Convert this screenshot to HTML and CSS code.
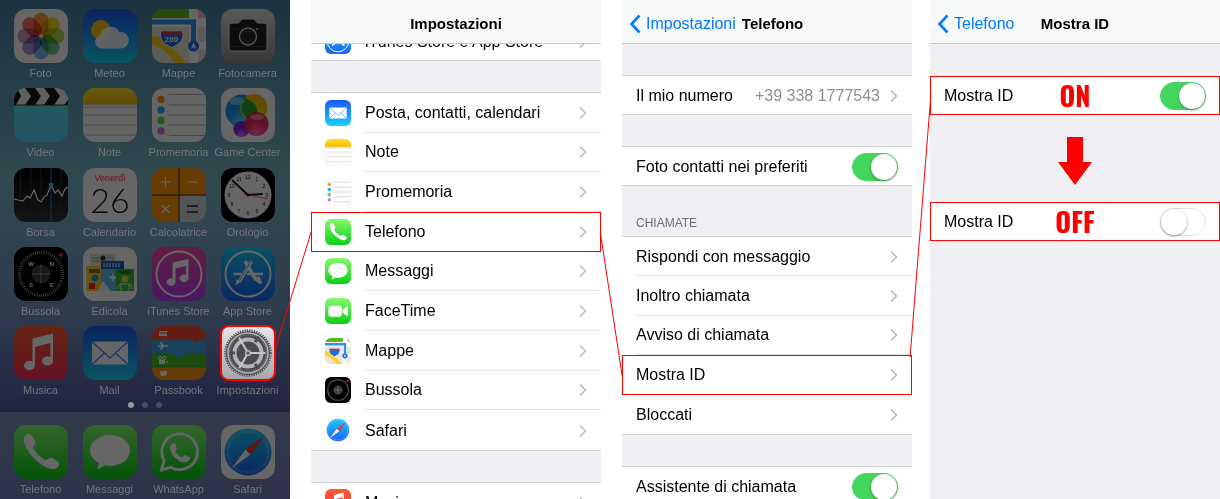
FILE: index.html
```html
<!DOCTYPE html>
<html lang="it">
<head>
    <meta charset="UTF-8">
    <meta name="viewport" content="width=device-width, initial-scale=1.0">
    <title>Mostra ID - Impostazioni Telefono</title>
    <link rel="stylesheet" href="styles.css">
</head>
<body>
    <!-- Icone -->
    <svg class="sprite" aria-hidden="true">
        <defs>
            <linearGradient id="gBlue" x2="0" y2="1"><stop stop-color="#1a56f0"/><stop offset="1" stop-color="#1ad2fb"/></linearGradient>
            <linearGradient id="gSky" x2="0" y2="1"><stop stop-color="#1ac8fb"/><stop offset="1" stop-color="#1a62f2"/></linearGradient>
            <linearGradient id="gGreen" x2="0" y2="1"><stop stop-color="#86fb70"/><stop offset="1" stop-color="#08cf14"/></linearGradient>
            <linearGradient id="gPink" x2="0" y2="1"><stop stop-color="#f0489c"/><stop offset="1" stop-color="#b73df5"/></linearGradient>
            <linearGradient id="gRed" x2="0" y2="1"><stop stop-color="#ff5a2c"/><stop offset="1" stop-color="#fb2d55"/></linearGradient>
            <linearGradient id="gGrey" x2="0" y2="1"><stop stop-color="#dedee0"/><stop offset="1" stop-color="#8c8c90"/></linearGradient>
            <linearGradient id="gVideo" x2="0" y2="1"><stop stop-color="#55efcb"/><stop offset="1" stop-color="#5bcaff"/></linearGradient>
            <linearGradient id="gYellow" x2="0" y2="1"><stop stop-color="#ffdf1e"/><stop offset="1" stop-color="#f5bd00"/></linearGradient>
            <linearGradient id="gStock" x2="0" y2="1"><stop stop-color="#000"/><stop offset="1" stop-color="#333"/></linearGradient>
            <linearGradient id="gGear" x2="0" y2="1"><stop stop-color="#e6e7ea"/><stop offset="1" stop-color="#a4a5aa"/></linearGradient>
            <radialGradient id="bBlue" cy=".9"><stop stop-color="#54e0ff"/><stop offset="1" stop-color="#1892e8"/></radialGradient>
            <radialGradient id="bYellow" cy=".9"><stop stop-color="#ffef40"/><stop offset="1" stop-color="#f0c000"/></radialGradient>
            <radialGradient id="bPink" cy=".9"><stop stop-color="#ff60c0"/><stop offset="1" stop-color="#f81850"/></radialGradient>
            <radialGradient id="bViolet" cy=".9"><stop stop-color="#e070ff"/><stop offset="1" stop-color="#7a20e0"/></radialGradient>
        </defs>
        <symbol id="foto" viewBox="0 0 54 54">
            <rect width="54" height="54" fill="#fff"/>
            <g class="petals" transform="translate(27 27)">
                <rect x="-7.5" y="-23.5" width="15" height="22" rx="7.5" fill="#f9a13a"/>
                <rect x="-7.5" y="-23.5" width="15" height="22" rx="7.5" fill="#efdd20" transform="rotate(45)"/>
                <rect x="-7.5" y="-23.5" width="15" height="22" rx="7.5" fill="#b9d55a" transform="rotate(90)"/>
                <rect x="-7.5" y="-23.5" width="15" height="22" rx="7.5" fill="#70c282" transform="rotate(135)"/>
                <rect x="-7.5" y="-23.5" width="15" height="22" rx="7.5" fill="#86b8e6" transform="rotate(180)"/>
                <rect x="-7.5" y="-23.5" width="15" height="22" rx="7.5" fill="#a394cf" transform="rotate(225)"/>
                <rect x="-7.5" y="-23.5" width="15" height="22" rx="7.5" fill="#cd98c8" transform="rotate(270)"/>
                <rect x="-7.5" y="-23.5" width="15" height="22" rx="7.5" fill="#f4705e" transform="rotate(315)"/>
            </g>
        </symbol>
        <symbol id="meteo" viewBox="0 0 54 54">
            <rect width="54" height="54" fill="url(#gBlue)"/>
            <circle cx="18" cy="21" r="10" fill="#fdc60d"/>
            <path d="M18.5 39.5a6.5 6.5 0 0 1-1.5-12.8a10.5 10.5 0 0 1 19.5-3.7a8.3 8.3 0 1 1 .5 16.5z" fill="#fff" opacity=".88"/>
        </symbol>
        <symbol id="mappe" viewBox="0 0 54 54">
            <rect width="54" height="54" fill="#ece4d2"/>
            <path d="M0 0h38v9H0z" fill="#5cb81c"/>
            <path d="M45 0h9v9h-9z" fill="#f7b9c8"/>
            <path d="M0 27c16 0 26 22 38 29H24C18 46 10 37 0 36z" fill="#fcd117"/>
            <path d="M0 9h54v9H0zM37 0h9v54h-9zM46 33h8v7h-8z" fill="#fff"/>
            <path d="M0 13h41.5v20" fill="none" stroke="#2f8df5" stroke-width="5"/>
            <circle cx="41.5" cy="37" r="5.5" fill="#1b6ee8"/>
            <path d="M41.5 33l2.5 7-2.500-2-2.500 2z" fill="#fff"/>
            <path d="M9 22h21.5c2 8-2 13-10.700 16.5C11 35 7 30 9 22z" fill="#1f6ad8" stroke="#fff"/>
            <path d="M9.5 22.5h20.5v3h-21z" fill="#e2333b"/>
        </symbol>
        <symbol id="fotocamera" viewBox="0 0 54 54">
            <rect width="54" height="54" fill="url(#gGrey)"/>
            <path d="M8 16q0-2 2-2h7c2 0 2-4 5-4h10c3 0 3 4 5 4h7q2 0 2 2v24q0 2-2 2H10q-2 0-2-2z" fill="#1c1c1e" stroke="#eee"/>
            <path d="M8.5 20h37M8.5 37.5h37" stroke="#555" stroke-width=".7"/>
            <circle cx="27" cy="27.5" r="8.5" fill="#333" stroke="#ddd" stroke-width="1.3"/>
            <circle cx="27" cy="27.5" r="5.5" fill="#28282a"/>
            <circle cx="36" cy="20" r="1" fill="#f8c200"/>
        </symbol>
        <symbol id="video" viewBox="0 0 54 54">
            <rect width="54" height="54" fill="url(#gVideo)"/>
            <path d="M0 0h54v17H0z" fill="#efefef"/>
            <path d="M0 0h3l4 8-5 9H0zM11 0h10l6 8-6 9H11l6-9zM30 0h10l6 8-6 9H30l6-9zM49 0h5v8zM54 12v5h-4z" fill="#161616"/>
            <path d="M0 17h54" stroke="#222"/>
        </symbol>
        <symbol id="note" viewBox="0 0 54 54">
            <rect width="54" height="54" fill="#fdfdfd"/>
            <rect width="54" height="16.5" fill="url(#gYellow)"/>
            <path d="M0 17h54M0 27h54M0 37h54M0 47h54" stroke="#c2c2c2"/>
            <path d="M0 19.5h54" stroke="#999" stroke-dasharray="1 1"/>
        </symbol>
        <symbol id="promemoria" viewBox="0 0 54 54">
            <rect width="54" height="54" fill="#fdfdfd"/>
            <path d="M17 6.5h37M17 17h37M17 27h37M17 37h37M17 47.5h37" stroke="#b4b4b4"/>
            <circle cx="9" cy="11.5" r="3.7" fill="#fd9512"/>
            <circle cx="9" cy="22" r="3.7" fill="#1badf8"/>
            <circle cx="9" cy="32.5" r="3.7" fill="#5fd83b"/>
            <circle cx="9" cy="43" r="3.7" fill="#cc73e1"/>
        </symbol>
        <symbol id="gamecenter" viewBox="0 0 54 54">
            <rect width="54" height="54" fill="#fff"/>
            <circle cx="21" cy="23" r="16.5" fill="url(#bBlue)"/>
            <circle cx="33" cy="19.5" r="13.5" fill="url(#bYellow)"/>
            <path d="M23 10C18 17 20 29 31 33c8-7 8-18-8-23z" fill="#27a32b"/>
            <circle cx="20.5" cy="41" r="8" fill="url(#bViolet)"/>
            <circle cx="35.5" cy="36" r="12" fill="url(#bPink)" opacity=".93"/>
            <ellipse cx="16" cy="13" rx="8" ry="4" fill="#fff" opacity=".4"/>
            <ellipse cx="36" cy="29" rx="7" ry="3" fill="#fff" opacity=".4"/>
        </symbol>
        <symbol id="borsa" viewBox="0 0 54 54">
            <rect width="54" height="54" fill="url(#gStock)"/>
            <path d="M6.5 0v54M17 0v54M27 0v54M47 0v54" stroke="#333"/>
            <path d="M37 0v54" stroke="#2a7fb8"/>
            <path d="M0 31l4 1 5 1 4-5 3 2 4-8 4 10 3 2 3-5 3-2 4-10 4 8 3-3 4 6 3-7 3-2" fill="none" stroke="#fff" stroke-width="1.2"/>
            <circle cx="37" cy="17" r="2.3" fill="#2ab3ff"/>
        </symbol>
        <symbol id="calcolatrice" viewBox="0 0 54 54">
            <rect width="54" height="54" fill="#ff9500"/>
            <path d="M27 27h27v27H27z" fill="#d0d1d6"/>
            <path d="M27 0v54M0 27h54" stroke="#222"/>
            <path d="M8.5 14h10M13.5 9v10M35.5 14h10M9.5 37l8 8M17.5 37l-8 8" stroke="#fff" stroke-width="1.2"/>
            <path d="M35 38h11M35 44h11" stroke="#222" stroke-width="1.3"/>
        </symbol>
        <symbol id="bussola" viewBox="0 0 54 54">
            <rect width="54" height="54" fill="#000"/>
            <circle cx="27" cy="27" r="21.5" fill="none" stroke="#ccc" stroke-width="3" stroke-dasharray=".7 1.5"/>
            <circle cx="27" cy="27" r="9.5" fill="#3c3c3e"/>
            <path d="M17.5 27h19M27 17.5v19" stroke="#999" stroke-width=".8"/>
            <path d="M44 8l5-3-1 6z" fill="#ff3b30"/>
        </symbol>
        <symbol id="edicola" viewBox="0 0 54 54">
            <rect width="54" height="54" fill="#fff"/>
            <path d="M7 7h26v12H7z" fill="#e2e2e2"/>
            <path d="M9 11h22M9 14h22" stroke="#999"/><circle cx="20" cy="11" r="2.5" fill="#333"/>
            <path d="M3.5 19h17v25h-17z" fill="#fcca1b"/>
            <path d="M6 22h11v4H6z" fill="#8a6c20"/>
            <circle cx="12" cy="31" r="3.5" fill="#2196e8"/><path d="M6 36h6v6H6z" fill="#e8261c"/>
            <path d="M18 14h23v30H18z" fill="#5bb8ee"/>
            <path d="M18 14h23v8H18z" fill="#185fc0"/>
            <path d="M21 16v4M24 16v4M27 16v4M30 16v4M33 16v4M36 16v4" stroke="#fff"/>
            <path d="M14 44l6-10 8 10zM25 30l4-1 1-5 1 5 4 2-4 1-1 3-1-3z" fill="#e8f5ff"/>
            <path d="M33 22h18v22H33z" fill="#3cb43c"/>
            <path d="M36 25h12" stroke="#1d7d24" stroke-width="3"/>
            <circle cx="42" cy="32" r="3.5" fill="#c8e63c"/>
            <path d="M34 42l3-5h10l3 5M38 37v7M46 37v7" stroke="#d8ffd0" fill="none"/>
        </symbol>
        <symbol id="itunes" viewBox="0 0 54 54">
            <rect width="54" height="54" fill="url(#gPink)"/>
            <circle cx="27" cy="27" r="22.5" fill="none" stroke="#fff" stroke-width="2"/>
            <path d="M20.5 15.5l16-3.500v19.5a4.5 3.8 0 1 1-2.500-3.500V19l-10.500 2.300v13.500a4.5 3.800 0 1 1-3-3.400z" fill="#fff"/>
        </symbol>
        <symbol id="appstore" viewBox="0 0 54 54">
            <rect width="54" height="54" fill="url(#gSky)"/>
            <circle cx="27" cy="27" r="22.5" fill="none" stroke="#fff" stroke-width="2"/>
            <path d="M12.5 27h8M26 27h16" stroke="#fff" stroke-width="2.5"/>
            <path d="M30.5 14L18 35M24 14l11 19" stroke="#fff" stroke-width="3.5"/>
            <path d="M30 14L18 34" stroke="#1a9af8" stroke-width=".8"/>
            <path d="M15.5 32l4 2.5-5 4zM33 31l5-2c2 3 3 5 2.5 8.5-4-1-6-3-7.500-6.500z" fill="#fff"/>
        </symbol>
        <symbol id="musica" viewBox="0 0 54 54">
            <rect width="54" height="54" fill="url(#gRed)"/>
            <path d="M18.5 12.5l20.5-5v27.5a5.5 4.600 0 1 1-2.500-3.900V17l-15.500 4V39.5a5.5 4.600 0 1 1-2.500-3.900z" fill="#fff"/>
        </symbol>
        <symbol id="mail" viewBox="0 0 54 54">
            <rect width="54" height="54" fill="url(#gBlue)"/>
            <rect x="9" y="15.5" width="36" height="23" rx="1.5" fill="#fff"/>
            <path d="M9.5 16L27 32l17.500-16M9.5 38l12-11M44.5 38l-12-11" fill="none" stroke="#3a8cf5" stroke-width="1.3"/>
        </symbol>
        <symbol id="passbook" viewBox="0 0 54 54">
            <rect width="54" height="54" fill="#fd9612"/>
            <path d="M0 13h54v15H0z" fill="#3fa5e0"/>
            <path d="M0 0h54v13.500h-7a3 3 0 0 1-6 0H0z" fill="#f9472f"/>
            <path d="M0 27h54v14H0z" fill="#42b81e"/>
            <path d="M21 27a6 5 0 0 0 12 0z" fill="#3fa5e0"/>
            <path d="M0 41h54" stroke="#2c7a12" stroke-dasharray="1 1"/>
            <path d="M7 5h8v5H7zM8 45h7v3l-2 2H9z" fill="#fff"/><path d="M7 7h8" stroke="#f9472f"/>
            <path d="M6 19.300h3l-1-3h1.500l2.500 3h4v1.400h-4l-2.500 3H8l1-3H6z" fill="#fff"/>
            <path d="M7 34h6v4H7zM13.500 36l2-1.500v3.500z" fill="#fff"/>
            <circle cx="8" cy="32" r="1.7" fill="none" stroke="#fff"/><circle cx="12.5" cy="32" r="1.7" fill="none" stroke="#fff"/>
        </symbol>
        <symbol id="impostazioni" viewBox="0 0 54 54">
            <rect width="54" height="54" fill="url(#gGear)"/>
            <circle cx="27" cy="27" r="22" fill="#4b4c4f"/>
            <circle cx="27" cy="27" r="22.8" fill="none" stroke="#4b4c4f" stroke-width="2" stroke-dasharray="1.2 1.2"/>
            <circle cx="27" cy="27" r="20" fill="none" stroke="#b0b1b4" stroke-width="1.6"/>
            <circle cx="27" cy="27" r="18.3" fill="none" stroke="#77787c" stroke-width="1.5" stroke-dasharray="1 1"/>
            <circle cx="27" cy="27" r="13.5" fill="none" stroke="#b4b5b9" stroke-width="4"/>
            <path d="M34 16l4-5M14 27H9M34 38l4 5" stroke="#4b4c4f" stroke-width="3"/>
            <path d="M29 27h15.5M26 25.200L18.200 11.800M26 28.800L18.200 42.200" stroke="#c6c7ca" stroke-width="2"/>
            <circle cx="27" cy="27" r="2.4" fill="#55565a" stroke="#c6c7ca" stroke-width="1.2"/>
        </symbol>
        <symbol id="telefono" viewBox="0 0 54 54">
            <rect width="54" height="54" fill="url(#gGreen)"/>
            <path d="M10 13c1-3 3-4 5-4 2 0 4 3 6 7 1 3-1 4-2 6 0 3 10 13 13 13 2 0 3-3 6-2 3 1 6 3 7 5 1 3-2 5-4 6C30 46 8 25 10 13z" fill="#fff"/>
        </symbol>
        <symbol id="messaggi" viewBox="0 0 54 54">
            <rect width="54" height="54" fill="url(#gGreen)"/>
            <path d="M27 10c11 0 20 6.5 20 15.5S38 41 27 41c-2 0-4 0-6-.7-2 2.200-4.500 3.700-7.500 3.700 1.500-1.500 2.500-4 2.500-6.200-5.500-2.800-9-7-9-12.300C7 16.500 16 10 27 10z" fill="#fff"/>
        </symbol>
        <symbol id="whatsapp" viewBox="0 0 54 54">
            <rect width="54" height="54" fill="url(#gGreen)"/>
            <path d="M9.5 45l2.700-9.500a17.800 17.800 0 1 1 6.700 6.700z" fill="none" stroke="#fff" stroke-width="2.8"/>
            <path d="M18 22c1-3 3-4.500 5-3.500l2 5c0 1.500-1.500 2-1.500 3 1.500 3 4 5 6.500 6 1 0 2-2.500 3-2.500l5 2.500c.5 2-2 4.500-5 5-7 0-15-8-15-15.500z" fill="#fff"/>
        </symbol>
        <symbol id="safari" viewBox="0 0 54 54">
            <rect width="54" height="54" fill="#fff"/>
            <circle cx="27" cy="27" r="23.5" fill="url(#gSky)"/>
            <circle cx="27" cy="27" r="20.5" fill="none" stroke="#fff" stroke-width="3" stroke-dasharray=".6 1.550" opacity=".5"/>
            <path d="M43 11L24.500 24.500l5 5z" fill="#ff3126"/>
            <path d="M11 43l13.500-18.500 5 5z" fill="#fff"/>
        </symbol>
        <symbol id="facetime" viewBox="0 0 54 54">
            <rect width="54" height="54" fill="url(#gGreen)"/>
            <rect x="7" y="16" width="28" height="23" rx="5" fill="#fff"/>
            <path d="M36.500 25L46 17q1.500-1 1.500 1v18.500q0 2-1.500 1L36.500 30z" fill="#fff"/>
        </symbol>
        <symbol id="chevron" viewBox="0 0 8 14">
            <path d="M1 1.500L6.500 7 1 12.500" fill="none" stroke="currentColor" stroke-width="1.5"/>
        </symbol>
        <symbol id="back" viewBox="0 0 12 20">
            <path d="M10.500 1.500L2.500 10l8 8.500" fill="none" stroke="currentColor" stroke-width="2.6"/>
        </symbol>
    </svg>

    <div class="guide">
        <!-- Schermata Home -->
        <section class="screen home">
            <div class="apps">
                <a class="app" href="#"><svg><use href="#foto"/></svg><span>Foto</span></a>
                <a class="app" href="#"><svg><use href="#meteo"/></svg><span>Meteo</span></a>
                <a class="app" href="#">
                    <svg viewBox="0 0 54 54">
                        <use href="#mappe"/>
                        <text x="19.5" y="33" class="svg-text" font-size="8" font-weight="700" fill="#fff">280</text>
                    </svg>
                    <span>Mappe</span>
                </a>
                <a class="app" href="#"><svg><use href="#fotocamera"/></svg><span>Fotocamera</span></a>
                <a class="app" href="#"><svg><use href="#video"/></svg><span>Video</span></a>
                <a class="app" href="#"><svg><use href="#note"/></svg><span>Note</span></a>
                <a class="app" href="#"><svg><use href="#promemoria"/></svg><span>Promemoria</span></a>
                <a class="app" href="#"><svg><use href="#gamecenter"/></svg><span>Game Center</span></a>
                <a class="app" href="#"><svg><use href="#borsa"/></svg><span>Borsa</span></a>
                <a class="app" href="#">
                    <svg viewBox="0 0 54 54">
                        <rect width="54" height="54" fill="#fff"/>
                        <text x="27" y="13" class="svg-text" font-size="9" fill="#ff2d21">Venerdì</text>
                        <text x="27" y="45" class="svg-text thin" font-size="34" fill="#111">26</text>
                    </svg>
                    <span>Calendario</span>
                </a>
                <a class="app" href="#"><svg><use href="#calcolatrice"/></svg><span>Calcolatrice</span></a>
                <a class="app" href="#">
                    <svg viewBox="0 0 54 54">
                        <rect width="54" height="54" fill="#000"/>
                        <circle cx="27" cy="27" r="23.5" fill="#fff"/>
                        <g class="svg-text" font-size="5" fill="#111">
                            <text x="27" y="11">12</text><text x="36" y="13">1</text><text x="43" y="20">2</text>
                            <text x="46" y="29">3</text><text x="43" y="38">4</text><text x="36" y="45">5</text>
                            <text x="27" y="47">6</text><text x="18" y="45">7</text><text x="11" y="38">8</text>
                            <text x="8" y="29">9</text><text x="11" y="20">10</text><text x="18" y="13">11</text>
                        </g>
                        <path d="M27 27L11.500 12.500M27 27l14-1" stroke="#111" stroke-width="1.8" stroke-linecap="round"/>
                        <path d="M23 26l24 5" stroke="#f33" stroke-width=".8"/>
                        <circle cx="27" cy="27" r="1.5" fill="#111"/>
                    </svg>
                    <span>Orologio</span>
                </a>
                <a class="app" href="#">
                    <svg viewBox="0 0 54 54">
                        <use href="#bussola"/>
                        <g class="svg-text" font-size="6" font-weight="700" fill="#fff">
                            <text x="17" y="19">W</text><text x="38" y="19">N</text>
                            <text x="17" y="40">S</text><text x="38" y="40">E</text>
                        </g>
                    </svg>
                    <span>Bussola</span>
                </a>
                <a class="app" href="#"><svg><use href="#edicola"/></svg><span>Edicola</span></a>
                <a class="app" href="#"><svg><use href="#itunes"/></svg><span>iTunes Store</span></a>
                <a class="app" href="#"><svg><use href="#appstore"/></svg><span>App Store</span></a>
                <a class="app" href="#"><svg><use href="#musica"/></svg><span>Musica</span></a>
                <a class="app" href="#"><svg><use href="#mail"/></svg><span>Mail</span></a>
                <a class="app" href="#"><svg><use href="#passbook"/></svg><span>Passbook</span></a>
                <a class="app selected" href="#"><svg><use href="#impostazioni"/></svg><span>Impostazioni</span></a>
            </div>
            <div class="dots"><i class="active"></i><i></i><i></i></div>
            <div class="dock">
                <a class="app" href="#"><svg><use href="#telefono"/></svg><span>Telefono</span></a>
                <a class="app" href="#"><svg><use href="#messaggi"/></svg><span>Messaggi</span></a>
                <a class="app" href="#"><svg><use href="#whatsapp"/></svg><span>WhatsApp</span></a>
                <a class="app" href="#"><svg><use href="#safari"/></svg><span>Safari</span></a>
            </div>
        </section>

        <!-- Impostazioni -->
        <section class="screen settings">
            <header class="navbar"><h1>Impostazioni</h1></header>
            <div class="group under-bar">
                <a class="row" href="#"><svg class="icon"><use href="#appstore"/></svg><span class="row-body">iTunes Store e App Store<svg class="chevron"><use href="#chevron"/></svg></span></a>
            </div>
            <div class="group nine-rows">
                <a class="row" href="#"><svg class="icon"><use href="#mail"/></svg><span class="row-body">Posta, contatti, calendari<svg class="chevron"><use href="#chevron"/></svg></span></a>
                <a class="row" href="#"><svg class="icon light"><use href="#note"/></svg><span class="row-body">Note<svg class="chevron"><use href="#chevron"/></svg></span></a>
                <a class="row" href="#"><svg class="icon light"><use href="#promemoria"/></svg><span class="row-body">Promemoria<svg class="chevron"><use href="#chevron"/></svg></span></a>
                <a class="row marked" href="#"><svg class="icon"><use href="#telefono"/></svg><span class="row-body">Telefono<svg class="chevron"><use href="#chevron"/></svg></span></a>
                <a class="row" href="#"><svg class="icon"><use href="#messaggi"/></svg><span class="row-body">Messaggi<svg class="chevron"><use href="#chevron"/></svg></span></a>
                <a class="row" href="#"><svg class="icon"><use href="#facetime"/></svg><span class="row-body">FaceTime<svg class="chevron"><use href="#chevron"/></svg></span></a>
                <a class="row" href="#"><svg class="icon"><use href="#mappe"/></svg><span class="row-body">Mappe<svg class="chevron"><use href="#chevron"/></svg></span></a>
                <a class="row" href="#"><svg class="icon"><use href="#bussola"/></svg><span class="row-body">Bussola<svg class="chevron"><use href="#chevron"/></svg></span></a>
                <a class="row" href="#"><svg class="icon light"><use href="#safari"/></svg><span class="row-body">Safari<svg class="chevron"><use href="#chevron"/></svg></span></a>
            </div>
            <div class="group">
                <a class="row" href="#"><svg class="icon"><use href="#musica"/></svg><span class="row-body">Musica<svg class="chevron"><use href="#chevron"/></svg></span></a>
            </div>
        </section>

        <!-- Telefono -->
        <section class="screen phone">
            <header class="navbar">
                <a class="back" href="#"><svg><use href="#back"/></svg>Impostazioni</a>
                <h1>Telefono</h1>
            </header>
            <div class="group">
                <a class="row" href="#"><span class="row-body">Il mio numero<span class="value">+39 338 1777543</span><svg class="chevron"><use href="#chevron"/></svg></span></a>
            </div>
            <div class="group">
                <label class="row"><span class="row-body">Foto contatti nei preferiti<input class="switch" type="checkbox" checked></span></label>
            </div>
            <h2 class="group-title">CHIAMATE</h2>
            <div class="group five-rows">
                <a class="row" href="#"><span class="row-body">Rispondi con messaggio<svg class="chevron"><use href="#chevron"/></svg></span></a>
                <a class="row" href="#"><span class="row-body">Inoltro chiamata<svg class="chevron"><use href="#chevron"/></svg></span></a>
                <a class="row" href="#"><span class="row-body">Avviso di chiamata<svg class="chevron"><use href="#chevron"/></svg></span></a>
                <a class="row marked" href="#"><span class="row-body">Mostra ID<svg class="chevron"><use href="#chevron"/></svg></span></a>
                <a class="row" href="#"><span class="row-body">Bloccati<svg class="chevron"><use href="#chevron"/></svg></span></a>
            </div>
            <div class="group">
                <label class="row"><span class="row-body">Assistente di chiamata<input class="switch" type="checkbox" checked></span></label>
            </div>
        </section>

        <!-- Mostra ID -->
        <section class="screen caller-id">
            <header class="navbar">
                <a class="back" href="#"><svg><use href="#back"/></svg>Telefono</a>
                <h1>Mostra ID</h1>
            </header>
            <label class="row marked state-row"><span>Mostra ID</span><strong>ON</strong><input class="switch" type="checkbox" checked></label>
            <svg class="arrow" viewBox="0 0 34 48"><path d="M9 0h16v25h9L17 48 0 25h9z"/></svg>
            <label class="row marked state-row"><span>Mostra ID</span><strong>OFF</strong><input class="switch" type="checkbox"></label>
        </section>

        <!-- Linee di collegamento tra le schermate -->
        <svg class="links" aria-hidden="true">
            <line x1="22.5%" y1="352" x2="25.5%" y2="232"/>
            <line x1="49.2%" y1="232" x2="51%" y2="376"/>
            <line x1="74.6%" y1="357" x2="76.3%" y2="95"/>
        </svg>
    </div>
</body>
</html>
```
FILE: styles.css
```css
* {
    box-sizing: border-box;
}
body {
    margin: 0;
    background-color: #fff;
    font-family: "Liberation Sans", Arial, sans-serif;
    font-size: 16px;
    color: #000;
}
a {
    color: inherit;
    text-decoration: none;
}
.sprite {
    position: absolute;
    width: 0;
    height: 0;
}
.svg-text {
    font-family: "Liberation Sans", Arial, sans-serif;
    text-anchor: middle;
}
.thin {
    font-family: Lato, Roboto, sans-serif;
    font-weight: 300;
}
.petals rect {
    mix-blend-mode: multiply;
}

.guide {
    position: relative;
    display: flex;
    height: 100vh;
    overflow: hidden;
}
.screen {
    flex: 1;
    min-width: 0;
    overflow: hidden;
    background-color: #efeff4;
}
.settings,
.phone {
    margin-left: 21px;
}
.caller-id {
    margin-left: 18px;
}

/* Home */
.home {
    display: flex;
    flex-direction: column;
    background: linear-gradient(#1c333f, #30494f 36%, #2e3c4e 62%, #22243f 82%);
}
.apps {
    display: grid;
    grid-template-columns: repeat(4, 1fr);
    align-content: space-between;
    height: 397px;
    padding: 9px 8px 0 6px;
}
.app {
    display: flex;
    flex-direction: column;
    align-items: center;
    font-size: 11px;
    line-height: 14px;
    color: #73797d;
    white-space: nowrap;
}
.app svg {
    width: 54px;
    height: 54px;
    margin-bottom: 3px;
    border-radius: 12px;
    filter: brightness(0.4);
}
.app.selected svg {
    border-radius: 8px;
    filter: none;
    outline: 2px solid #f00;
    outline-offset: -1px;
}
.dots {
    display: flex;
    justify-content: center;
    align-items: center;
    gap: 8px;
    height: 15px;
}
.dots i {
    width: 6px;
    height: 6px;
    border-radius: 50%;
    background-color: #4c4e66;
}
.dots .active {
    background-color: #98989e;
}
.dock {
    flex: 1;
    display: grid;
    grid-template-columns: repeat(4, 1fr);
    padding: 13px 8px 0 6px;
    background: linear-gradient(#333b4c, #2c3349);
}

/* Liste */
.navbar {
    position: relative;
    display: grid;
    grid-template-columns: 1fr auto 1fr;
    align-items: center;
    height: 44px;
    padding-top: 4px;
    background-color: #f7f8f8;
    border-bottom: 1px solid #c8c8cc;
}
.navbar h1 {
    grid-column: 2;
    margin: 0;
    font-size: 15px;
}
.back {
    display: flex;
    align-items: center;
    gap: 5px;
    padding: 0 6px 0 7px;
    color: #007aff;
}
.back svg {
    width: 12px;
    height: 20px;
}
.group {
    display: grid;
    grid-auto-rows: 1fr;
    margin-bottom: 31px;
    background-color: #fff;
    border: solid #d2d2d6;
    border-width: 1px 0;
}
.phone .navbar {
    margin-bottom: 31px;
}
.nine-rows {
    height: 359px;
}
.five-rows {
    height: 199px;
}
.under-bar {
    margin-top: -23px;
}
.row {
    display: flex;
    align-items: center;
    gap: 14px;
    min-height: 38px;
    padding-left: 14px;
}
.row-body {
    flex: 1;
    align-self: stretch;
    display: flex;
    align-items: center;
    justify-content: space-between;
    padding: 1px 14px 0 0;
    border-bottom: 1px solid #e2e2e5;
    white-space: nowrap;
}
.row:last-child .row-body {
    border-bottom: none;
}
.marked {
    outline: 1px solid #f00;
    outline-offset: -1px;
}
.icon {
    width: 26px;
    height: 26px;
    border-radius: 6px;
}
.light {
    box-shadow: 0 0 1px #aaa;
}
.chevron {
    width: 8px;
    height: 14px;
    color: #b8b8bd;
}
.value {
    margin-left: auto;
    margin-right: 10px;
    color: #8e8e93;
}
.group-title {
    margin: 0 0 7px;
    padding-left: 14px;
    font-size: 12px;
    font-weight: normal;
    line-height: 12px;
    color: #6d6d72;
}
.switch {
    appearance: none;
    display: flex;
    width: 46px;
    height: 28px;
    margin: 0;
    border: 1px solid #e0e0e2;
    border-radius: 14px;
    background-color: #fff;
}
.switch::before {
    content: "";
    width: 26px;
    height: 26px;
    border-radius: 50%;
    background-color: #fff;
    box-shadow: 0 1px 3px rgba(0,0,0,0.4);
}
.switch:checked {
    justify-content: flex-end;
    border-color: #43d65c;
    background-color: #43d65c;
}

/* Mostra ID */
.caller-id .navbar {
    margin-bottom: 32px;
}
.state-row {
    display: grid;
    grid-template-columns: 1fr auto 1fr;
    padding-right: 14px;
    background-color: #fff;
}
.state-row strong {
    font-family: "Oswald", "Roboto Condensed", "Liberation Sans Narrow", "Liberation Sans", sans-serif;
    font-size: 27px;
    line-height: 39px;
    color: #f00;
}
.state-row .switch {
    justify-self: end;
}
.arrow {
    display: block;
    width: 34px;
    height: 48px;
    margin: 22px auto 17px;
    fill: #f00;
}
.links {
    position: absolute;
    top: 0;
    left: 0;
    width: 100%;
    height: 100%;
    pointer-events: none;
}
.links line {
    stroke: #f00;
}
```
